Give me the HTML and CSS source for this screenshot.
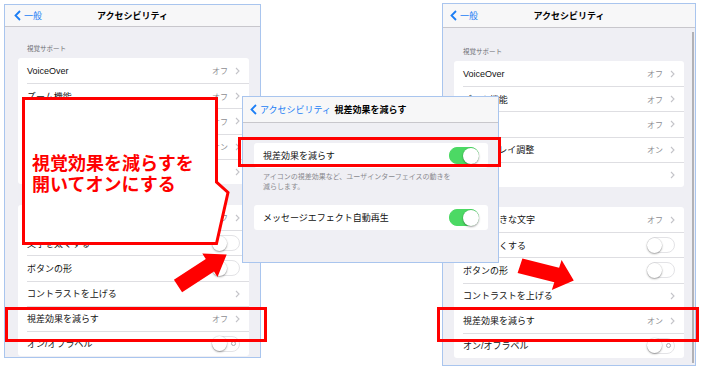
FILE: index.html
```html
<!DOCTYPE html>
<html lang="ja">
<head>
    <meta charset="utf-8">
    <title>視差効果を減らす</title>

    <link rel="stylesheet" href="styles.css">
</head>
<body>
    <div class="canvas">

        <!-- before: accessibility list, off -->
        <section class="screen screen-a">
            <header class="nav">
                <span class="back">
                    <svg viewBox="0 0 7 11"><path d="M6 1 L1.5 5.5 L6 10"/></svg>
                    一般
                </span>
                <span class="title">アクセシビリティ</span>
            </header>
            <div class="content">
                <p class="group-label">視覚サポート</p>
                <ul class="group">
                    <li class="row"><div class="row-body"><span class="label">VoiceOver</span><span class="detail">オフ</span><svg class="chev" viewBox="0 0 5 8"><path d="M1 1 L4 4 L1 7"/></svg></div></li>
                    <li class="row"><div class="row-body"><span class="label">ズーム機能</span><span class="detail">オフ</span><svg class="chev" viewBox="0 0 5 8"><path d="M1 1 L4 4 L1 7"/></svg></div></li>
                    <li class="row"><div class="row-body"><span class="label">拡大鏡</span><span class="detail">オフ</span><svg class="chev" viewBox="0 0 5 8"><path d="M1 1 L4 4 L1 7"/></svg></div></li>
                    <li class="row"><div class="row-body"><span class="label">ディスプレイ調整</span><span class="detail">オン</span><svg class="chev" viewBox="0 0 5 8"><path d="M1 1 L4 4 L1 7"/></svg></div></li>
                    <li class="row"><div class="row-body"><span class="label">スピーチ</span><svg class="chev" viewBox="0 0 5 8"><path d="M1 1 L4 4 L1 7"/></svg></div></li>
                </ul>
                <ul class="group">
                    <li class="row"><div class="row-body"><span class="label">さらに大きな文字</span><span class="detail">オフ</span><svg class="chev" viewBox="0 0 5 8"><path d="M1 1 L4 4 L1 7"/></svg></div></li>
                    <li class="row"><div class="row-body"><span class="label">文字を太くする</span><span class="switch"><span class="knob"></span></span></div></li>
                    <li class="row"><div class="row-body"><span class="label">ボタンの形</span><span class="switch"><span class="knob"></span></span></div></li>
                    <li class="row"><div class="row-body"><span class="label">コントラストを上げる</span><svg class="chev" viewBox="0 0 5 8"><path d="M1 1 L4 4 L1 7"/></svg></div></li>
                    <li class="row"><div class="row-body"><span class="label">視差効果を減らす</span><span class="detail">オフ</span><svg class="chev" viewBox="0 0 5 8"><path d="M1 1 L4 4 L1 7"/></svg></div></li>
                    <li class="row"><div class="row-body"><span class="label">オン/オフラベル</span><span class="switch"><span class="knob"></span><span class="ring"></span></span></div></li>
                </ul>
            </div>
        </section>

        <!-- after: accessibility list, on -->
        <section class="screen screen-b">
            <header class="nav">
                <span class="back">
                    <svg viewBox="0 0 7 11"><path d="M6 1 L1.5 5.5 L6 10"/></svg>
                    一般
                </span>
                <span class="title">アクセシビリティ</span>
            </header>
            <div class="content">
                <p class="group-label">視覚サポート</p>
                <ul class="group">
                    <li class="row"><div class="row-body"><span class="label">VoiceOver</span><span class="detail">オフ</span><svg class="chev" viewBox="0 0 5 8"><path d="M1 1 L4 4 L1 7"/></svg></div></li>
                    <li class="row"><div class="row-body"><span class="label">ズーム機能</span><span class="detail">オフ</span><svg class="chev" viewBox="0 0 5 8"><path d="M1 1 L4 4 L1 7"/></svg></div></li>
                    <li class="row"><div class="row-body"><span class="label">拡大鏡</span><span class="detail">オフ</span><svg class="chev" viewBox="0 0 5 8"><path d="M1 1 L4 4 L1 7"/></svg></div></li>
                    <li class="row"><div class="row-body"><span class="label">ディスプレイ調整</span><span class="detail">オン</span><svg class="chev" viewBox="0 0 5 8"><path d="M1 1 L4 4 L1 7"/></svg></div></li>
                    <li class="row"><div class="row-body"><span class="label">スピーチ</span><svg class="chev" viewBox="0 0 5 8"><path d="M1 1 L4 4 L1 7"/></svg></div></li>
                </ul>
                <ul class="group">
                    <li class="row"><div class="row-body"><span class="label">さらに大きな文字</span><span class="detail">オフ</span><svg class="chev" viewBox="0 0 5 8"><path d="M1 1 L4 4 L1 7"/></svg></div></li>
                    <li class="row"><div class="row-body"><span class="label">文字を太くする</span><span class="switch"><span class="knob"></span></span></div></li>
                    <li class="row"><div class="row-body"><span class="label">ボタンの形</span><span class="switch"><span class="knob"></span></span></div></li>
                    <li class="row"><div class="row-body"><span class="label">コントラストを上げる</span><svg class="chev" viewBox="0 0 5 8"><path d="M1 1 L4 4 L1 7"/></svg></div></li>
                    <li class="row"><div class="row-body"><span class="label">視差効果を減らす</span><span class="detail">オン</span><svg class="chev" viewBox="0 0 5 8"><path d="M1 1 L4 4 L1 7"/></svg></div></li>
                    <li class="row"><div class="row-body"><span class="label">オン/オフラベル</span><span class="switch"><span class="knob"></span><span class="ring"></span></span></div></li>
                </ul>
            </div>
            <span class="scrollbar"></span>
        </section>

        <!-- detail page -->
        <section class="screen screen-c">
            <header class="nav">
                <span class="back">
                    <svg viewBox="0 0 7 11"><path d="M6 1 L1.5 5.5 L6 10"/></svg>
                    アクセシビリティ
                </span>
                <span class="title">視差効果を減らす</span>
            </header>
            <div class="content">
                <ul class="group">
                    <li class="row"><div class="row-body"><span class="label">視差効果を減らす</span><span class="switch on"><span class="knob"></span></span></div></li>
                </ul>
                <p class="footnote">アイコンの視差効果など、ユーザインターフェイスの動きを<br>減らします。</p>
                <ul class="group">
                    <li class="row"><div class="row-body"><span class="label">メッセージエフェクト自動再生</span><span class="switch on"><span class="knob"></span></span></div></li>
                </ul>
            </div>
        </section>

        <div class="callout">
            <svg viewBox="0 0 208 148"><polygon points="1.5,1.5 194.5,1.5 194.5,85 206,95.5 194.5,146.5 1.5,146.5"/></svg>
            <p>視覚効果を減らすを<br>開いてオンにする</p>
        </div>

        <div class="mark mark-a"></div>
        <div class="mark mark-c"></div>
        <div class="mark mark-b"></div>

        <svg class="arrows" viewBox="0 0 705 372">
            <polygon points="173.9,279.7 205.8,259 202.3,253.6 226.7,254.4 217.5,277.1 214,271.6 182.1,292.3"/>
            <polygon points="522.4,258.5 559.1,267.7 561.6,260 573.8,280.6 551.8,290 554.3,282.3 517.6,273.1"/>
        </svg>
    </div>
</body>
</html>
```

FILE: styles.css
```css
* {
    box-sizing: border-box;
}

body {
    margin: 0;
    background-color: #fff;
    font-family: "Liberation Sans", "Noto Sans CJK JP", sans-serif;
}

.canvas {
    position: relative;
    width: 705px;
    height: 372px;
    overflow: hidden;
}

/* screenshots */

.screen {
    position: absolute;
    display: flex;
    flex-direction: column;
    border: 1px solid #a9c5ee;
    background-color: #efeff4;
    overflow: hidden;

    --nav-h: 22px;
    --nav-pad: 9px;
    --label-top: 18px;
    --pl: 13px;
    --pr: 11px;
    --gap: 21px;
}

.screen-a {
    left: 4px;
    top: 4px;
    width: 257px;
    height: 354px;
}

.screen-b {
    left: 442px;
    top: 3px;
    width: 254px;
    height: 363px;

    --nav-h: 24px;
    --nav-pad: 7px;
    --label-top: 20px;
    --pl: 11px;
    --gap: 20px;
}

.screen-c {
    left: 242px;
    top: 96px;
    width: 257px;
    height: 167px;

    --nav-h: 26px;
    --nav-pad: 7px;
    --pl: 11px;
    --pr: 10px;
}

.nav {
    flex: none;
    display: grid;
    grid-template-columns: 1fr auto 1fr;
    align-items: center;
    height: var(--nav-h);
    padding: 0 var(--nav-pad);
    background-color: #f7f7f8;
    border-bottom: 1px solid #c8c7cc;
}

.back {
    display: flex;
    align-items: center;
    gap: 3px;
    color: #1b7ef5;
    font-size: 9px;
    white-space: nowrap;
}

.back svg {
    width: 7px;
    height: 11px;
    fill: none;
    stroke: #1b7ef5;
    stroke-width: 1.8;
}

.title {
    font-size: 9px;
    font-weight: 700;
    color: #000;
    white-space: nowrap;
}

.content {
    flex: 1;
    padding: 0 var(--pr) 0 var(--pl);
}

.screen-c .content {
    padding-top: 20px;
}

.group-label {
    margin: 0;
    padding: var(--label-top) 0 5px 9px;
    font-size: 6.5px;
    line-height: 8px;
    color: #6d6d72;
}

.group {
    list-style: none;
    margin: 0;
    padding: 0;
    background-color: #fff;
    border-radius: 3px;
    overflow: hidden;
}

.group + .group {
    margin-top: var(--gap);
}

.row {
    display: flex;
    height: 25.2px;
    padding-left: 9px;
}

.row-body {
    flex: 1;
    display: flex;
    align-items: center;
    padding-right: 9px;
    font-size: 9px;
    color: #111;
}

.row + .row .row-body {
    border-top: 1px solid #dedee2;
}

.label {
    flex: 1;
    white-space: nowrap;
}

.detail {
    font-size: 8px;
    color: #8e8e93;
}

.chev {
    width: 5px;
    height: 8px;
    margin-left: 7px;
    fill: none;
    stroke: #c4c4c9;
    stroke-width: 1.1;
}

.switch {
    display: flex;
    align-items: center;
    width: 28px;
    height: 16px;
    border: 1px solid #e3e3e6;
    border-radius: 8px;
    background-color: #fff;
}

.knob {
    width: 15px;
    height: 15px;
    margin-left: -1px;
    border-radius: 50%;
    background-color: #fff;
    box-shadow: 0 1px 2px rgba(0, 0, 0, 0.35), 0 0 0 0.5px rgba(0, 0, 0, 0.08);
}

.switch.on {
    justify-content: flex-end;
    background-color: #4cd964;
    border-color: #4cd964;
}

.switch.on .knob {
    margin-left: 0;
    margin-right: -1px;
}

.screen-c .switch {
    width: 30px;
    height: 17px;
}

.screen-c .knob {
    width: 16px;
    height: 16px;
}

.ring {
    width: 5px;
    height: 5px;
    margin-left: auto;
    margin-right: 3px;
    border: 1px solid #a8a8ad;
    border-radius: 50%;
}

.footnote {
    margin: 0;
    padding: 4px 9px 0;
    font-size: 7px;
    line-height: 10px;
    color: #8a8a8f;
}

.footnote + .group {
    margin-top: 13px;
}

.scrollbar {
    position: absolute;
    right: 1px;
    top: 28px;
    bottom: 2px;
    width: 2px;
    background-color: #b2b2b6;
}

/* annotations */

.callout {
    position: absolute;
    left: 22px;
    top: 97px;
    width: 208px;
    height: 148px;
    display: flex;
    align-items: center;
    padding: 3px 0 0 10px;
}

.callout svg {
    position: absolute;
    inset: 0;
    width: 100%;
    height: 100%;
    overflow: visible;
    fill: #fff;
    stroke: #f00;
    stroke-width: 3;
}

.callout p {
    position: relative;
    margin: 0;
    color: #f00;
    font-family: "Noto Sans CJK JP", sans-serif;
    font-weight: 700;
    font-size: 18px;
    line-height: 21px;
}

.mark {
    position: absolute;
    border: 3px solid #f00;
}

.mark-a {
    left: 5px;
    top: 307px;
    width: 262px;
    height: 35px;
}

.mark-c {
    left: 238px;
    top: 137px;
    width: 263px;
    height: 30px;
}

.mark-b {
    left: 437px;
    top: 307px;
    width: 262px;
    height: 35px;
}

.arrows {
    position: absolute;
    inset: 0;
    width: 705px;
    height: 372px;
    fill: #f00;
}
```
